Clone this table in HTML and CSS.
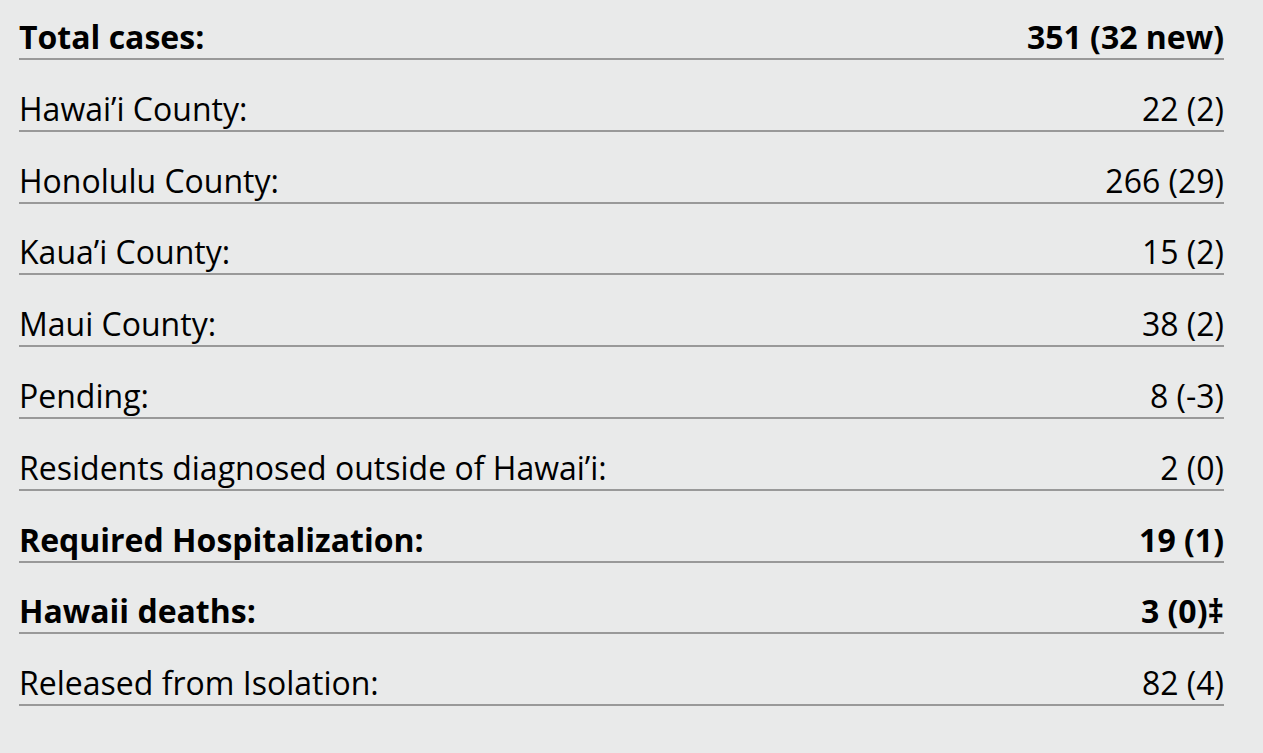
FILE: index.html
```html
<!DOCTYPE html>
<html>
<head>
<meta charset="utf-8">
<link rel="stylesheet" href="styles.css">
</head>
<body>
<div class="stats">
  <div class="row bold"><span>Total cases:</span><span>351 (32 new)</span></div>
  <div class="row"><span>Hawai’i County:</span><span>22 (2)</span></div>
  <div class="row"><span>Honolulu County:</span><span>266 (29)</span></div>
  <div class="row"><span>Kaua’i County:</span><span>15 (2)</span></div>
  <div class="row"><span>Maui County:</span><span>38 (2)</span></div>
  <div class="row"><span>Pending:</span><span>8 (-3)</span></div>
  <div class="row"><span>Residents diagnosed outside of Hawai’i:</span><span>2 (0)</span></div>
  <div class="row bold"><span>Required Hospitalization:</span><span>19 (1)</span></div>
  <div class="row bold"><span>Hawaii deaths:</span><span>3 (0)‡</span></div>
  <div class="row"><span>Released from Isolation:</span><span>82 (4)</span></div>
</div>
</body>
</html>
```
FILE: styles.css
```css
html, body {
  margin: 0;
  padding: 0;
  background: #e9eaea;
}
body {
  font-family: "Open Sans", "Liberation Sans", sans-serif;
  color: #000;
}
.stats {
  margin: -11.8px 0 0 19px;
  width: 1205px;
  display: flex;
  flex-direction: column;
}
.row {
  display: flex;
  justify-content: space-between;
  padding: 27.8px 0 0 0;
  font-size: 32px;
  line-height: 42px;
  border-bottom: 2px solid #999;
}
.bold {
  font-weight: 700;
}
```
